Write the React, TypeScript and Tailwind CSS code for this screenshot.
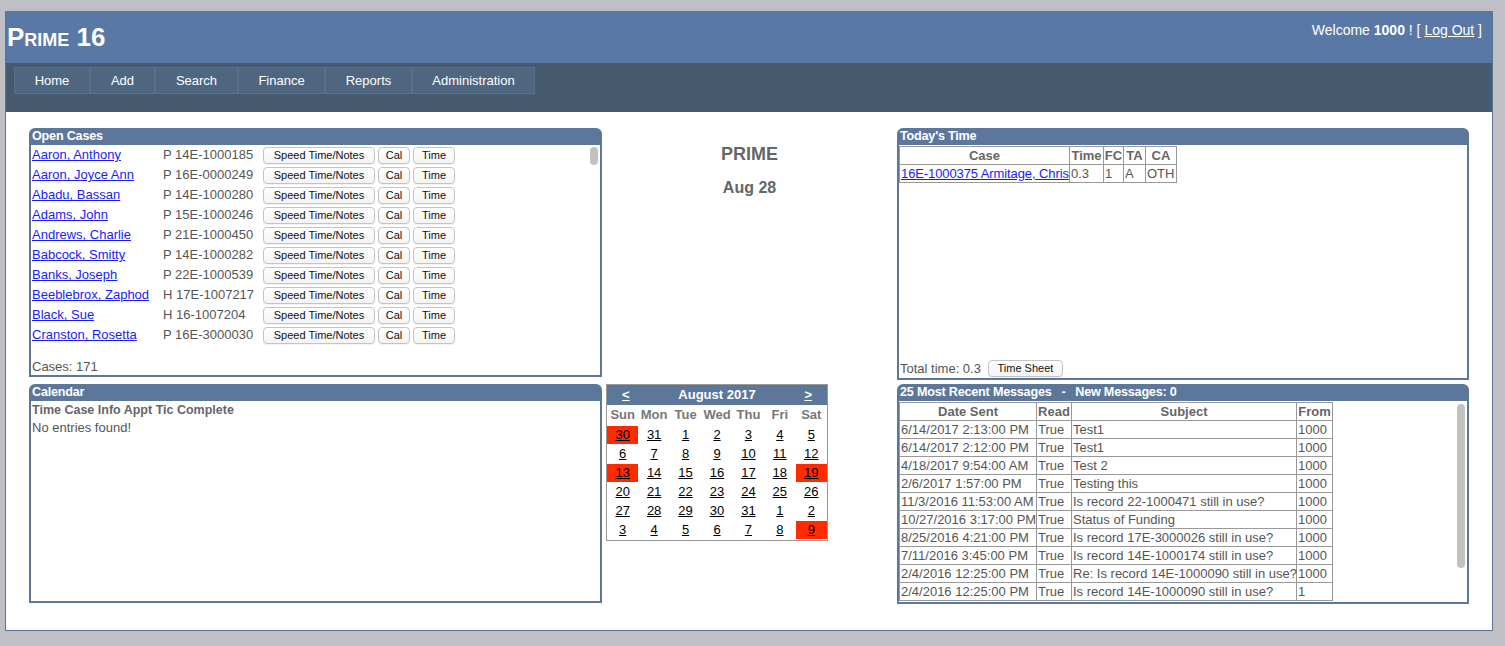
import React from 'react';

const cases = [
  ['Aaron, Anthony', 'P 14E-1000185'],
  ['Aaron, Joyce Ann', 'P 16E-0000249'],
  ['Abadu, Bassan', 'P 14E-1000280'],
  ['Adams, John', 'P 15E-1000246'],
  ['Andrews, Charlie', 'P 21E-1000450'],
  ['Babcock, Smitty', 'P 14E-1000282'],
  ['Banks, Joseph', 'P 22E-1000539'],
  ['Beeblebrox, Zaphod', 'H 17E-1007217'],
  ['Black, Sue', 'H 16-1007204'],
  ['Cranston, Rosetta', 'P 16E-3000030'],
];

const messages = [
  ['6/14/2017 2:13:00 PM', 'Test1', '1000'],
  ['6/14/2017 2:12:00 PM', 'Test1', '1000'],
  ['4/18/2017 9:54:00 AM', 'Test 2', '1000'],
  ['2/6/2017 1:57:00 PM', 'Testing this', '1000'],
  ['11/3/2016 11:53:00 AM', 'Is record 22-1000471 still in use?', '1000'],
  ['10/27/2016 3:17:00 PM', 'Status of Funding', '1000'],
  ['8/25/2016 4:21:00 PM', 'Is record 17E-3000026 still in use?', '1000'],
  ['7/11/2016 3:45:00 PM', 'Is record 14E-1000174 still in use?', '1000'],
  ['2/4/2016 12:25:00 PM', 'Re: Is record 14E-1000090 still in use?', '1000'],
  ['2/4/2016 12:25:00 PM', 'Is record 14E-1000090 still in use?', '1'],
];

const weeks = [
  [30, 31, 1, 2, 3, 4, 5],
  [6, 7, 8, 9, 10, 11, 12],
  [13, 14, 15, 16, 17, 18, 19],
  [20, 21, 22, 23, 24, 25, 26],
  [27, 28, 29, 30, 31, 1, 2],
  [3, 4, 5, 6, 7, 8, 9],
];

// week index + day index of red cells
const redCells = ['0-0', '2-0', '2-6', '5-6'];

const navItems = [
  ['Home', 'w-[76px]'],
  ['Add', 'w-[65px]'],
  ['Search', 'w-[83px]'],
  ['Finance', 'w-[87px]'],
  ['Reports', 'w-[87px]'],
  ['Administration', 'w-[123px]'],
];

function SmallButton({ label, width }: { label: string; width: string }) {
  return (
    <button
      className={`${width} h-[17px] rounded-[4px] border border-[#c4c4c4] bg-gradient-to-b from-white to-[#f4f4f4] text-[11px] leading-none text-[#111] shadow-[0_1px_0_rgba(0,0,0,0.05)]`}
    >
      {label}
    </button>
  );
}

function Panel({ title, className, children }: { title: string; className: string; children: React.ReactNode }) {
  return (
    <div className={`flex flex-col rounded-t-[6px] border-2 border-[#5d779b] bg-white ${className}`}>
      <div className="h-[15px] shrink-0 whitespace-pre bg-[#5d779b] px-[1px] text-[12.6px] font-bold leading-[13px] tracking-[-0.2px] text-white">
        {title}
      </div>
      {children}
    </div>
  );
}

function FakeScrollbar({ thumb }: { thumb: string }) {
  return (
    <div className="w-[12px] shrink-0 pt-[2px]">
      <div className={`mx-auto w-[8px] rounded-full bg-[#c2c2c2] ${thumb}`} />
    </div>
  );
}

export default function App() {
  return (
    <div className="min-h-screen bg-[#bfc0c5] px-[5px] pt-[11px] font-['Liberation_Sans',Arial,sans-serif]">
      <div className="w-[1488px] border border-t-0 border-[#5c7396] bg-white">
        {/* Header */}
        <div className="flex h-[52px] items-start justify-between bg-[#5978a6] pr-[10px]">
          <div className="pl-[1px] pt-[11px] text-[26px] font-bold leading-[30px] text-white [font-variant:small-caps]">
            Prime 16
          </div>
          <div className="pt-[9px] text-[14px] text-white">
            Welcome <b>1000</b> ! [ <span className="underline">Log Out</span> ]
          </div>
        </div>

        {/* Nav */}
        <div className="h-[49px] bg-[#45596f] pl-[8px] pt-[4px]">
          <div className="flex">
            {navItems.map(([label, w]) => (
              <div
                key={label}
                className={`${w} flex h-[27px] items-center justify-center border border-[#5a6f88] bg-[#4f6680] text-[13px] text-white`}
              >
                {label}
              </div>
            ))}
          </div>
        </div>

        {/* Content */}
        <div className="flex h-[518px] pl-[23px] pt-[16px]">
          {/* Left column */}
          <div className="flex w-[573px] flex-col gap-[7px]">
            <Panel title="Open Cases" className="h-[249px]">
              <div className="flex h-[200px]">
                <div className="flex-1 pl-[1px]">
                  {cases.map(([name, num]) => (
                    <div key={name} className="flex h-[20px] items-center text-[13px]">
                      <a className="w-[131px] text-[#1a1aff] underline">{name}</a>
                      <span className="w-[100px] text-[#555]">{num}</span>
                      <div className="flex gap-[3px]">
                        <SmallButton label="Speed Time/Notes" width="w-[112px]" />
                        <SmallButton label="Cal" width="w-[32px]" />
                        <SmallButton label="Time" width="w-[42px]" />
                      </div>
                    </div>
                  ))}
                </div>
                <FakeScrollbar thumb="h-[18px]" />
              </div>
              <div className="mt-auto pl-[1px] text-[13px] leading-[16px] text-[#555]">Cases: 171</div>
            </Panel>

            <Panel title="Calendar" className="h-[219px]">
              <div className="pl-[1px] text-[13px] leading-[18px] text-[#555]">
                <div className="text-[12.5px] font-bold text-[#666]">Time Case Info Appt Tic Complete</div>
                <div>No entries found!</div>
              </div>
            </Panel>
          </div>

          {/* Center column */}
          <div className="flex w-[295px] flex-col">
            <div className="pt-[16px] text-center text-[18px] font-bold leading-[20px] text-[#666]">PRIME</div>
            <div className="pt-[14px] text-center text-[16px] font-bold leading-[20px] text-[#666]">Aug 28</div>
            <div className="ml-[4px] mt-[186px] w-[222px] border border-[#999] bg-white">
              <div className="flex h-[20px] items-center justify-between bg-[#5d779b] px-[15px] text-[13px] font-bold text-white">
                <span className="underline">&lt;</span>
                <span>August 2017</span>
                <span className="underline">&gt;</span>
              </div>
              <div className="grid grid-cols-7">
                {['Sun', 'Mon', 'Tue', 'Wed', 'Thu', 'Fri', 'Sat'].map((d) => (
                  <div key={d} className="h-[21px] text-center text-[13px] font-bold leading-[19px] text-[#777]">
                    {d}
                  </div>
                ))}
                {weeks.map((week, wi) =>
                  week.map((day, di) => (
                    <div
                      key={`${wi}-${di}`}
                      className={`h-[19px] pb-[1px] text-center text-[13px] leading-[18px] ${
                        redCells.includes(`${wi}-${di}`) ? 'bg-[#ff2a00] bg-clip-content' : ''
                      }`}
                    >
                      <span className="text-black underline">{day}</span>
                    </div>
                  ))
                )}
              </div>
            </div>
          </div>

          {/* Right column */}
          <div className="flex w-[572px] flex-col gap-[4px]">
            <Panel title="Today's Time" className="h-[252px]">
              <table className="mt-[1px] w-[277px] table-fixed border-collapse text-[13px] leading-[15px]">
                <colgroup>
                  <col className="w-[170px]" />
                  <col className="w-[34px]" />
                  <col className="w-[20px]" />
                  <col className="w-[22px]" />
                  <col className="w-[31px]" />
                </colgroup>
                <thead>
                  <tr className="h-[18px] font-bold text-[#666]">
                    {['Case', 'Time', 'FC', 'TA', 'CA'].map((h) => (
                      <th key={h} className="border border-[#999] p-0 text-center">
                        {h}
                      </th>
                    ))}
                  </tr>
                </thead>
                <tbody>
                  <tr className="h-[18px] text-[#555]">
                    <td className="overflow-hidden whitespace-nowrap border border-[#999] p-0 pl-[1px] tracking-[-0.1px]">
                      <a className="text-[#1a1aff] underline">16E-1000375 Armitage, Chris</a>
                    </td>
                    <td className="border border-[#999] p-0 pl-[1px]">0.3</td>
                    <td className="border border-[#999] p-0 pl-[1px]">1</td>
                    <td className="border border-[#999] p-0 pl-[1px]">A</td>
                    <td className="border border-[#999] p-0 pl-[1px]">OTH</td>
                  </tr>
                </tbody>
              </table>
              <div className="mt-auto flex items-center gap-[7px] pl-[1px] text-[13px] text-[#555]">
                <span>Total time: 0.3</span>
                <SmallButton label="Time Sheet" width="w-[75px]" />
              </div>
            </Panel>

            <Panel title="25 Most Recent Messages   -   New Messages: 0" className="h-[220px]">
              <div className="flex flex-1 pt-[1px]">
                <div className="flex-1">
                  <table className="w-[433px] table-fixed border-collapse text-[13px] leading-[16px]">
                    <colgroup>
                      <col className="w-[137px]" />
                      <col className="w-[35px]" />
                      <col className="w-[225px]" />
                      <col className="w-[36px]" />
                    </colgroup>
                    <thead>
                      <tr className="h-[18px] font-bold text-[#666]">
                        {['Date Sent', 'Read', 'Subject', 'From'].map((h) => (
                          <th key={h} className="border border-[#999] p-0 text-center">
                            {h}
                          </th>
                        ))}
                      </tr>
                    </thead>
                    <tbody>
                      {messages.map(([date, subject, from], i) => (
                        <tr key={i} className="h-[18px] text-[#555]">
                          <td className="whitespace-nowrap border border-[#999] p-0 pl-[1px]">{date}</td>
                          <td className="border border-[#999] p-0 pl-[1px]">True</td>
                          <td className="whitespace-nowrap border border-[#999] p-0 pl-[1px]">{subject}</td>
                          <td className="border border-[#999] p-0 pl-[1px]">{from}</td>
                        </tr>
                      ))}
                    </tbody>
                  </table>
                </div>
                <FakeScrollbar thumb="h-[164px]" />
              </div>
            </Panel>
          </div>
        </div>
      </div>
    </div>
  );
}
